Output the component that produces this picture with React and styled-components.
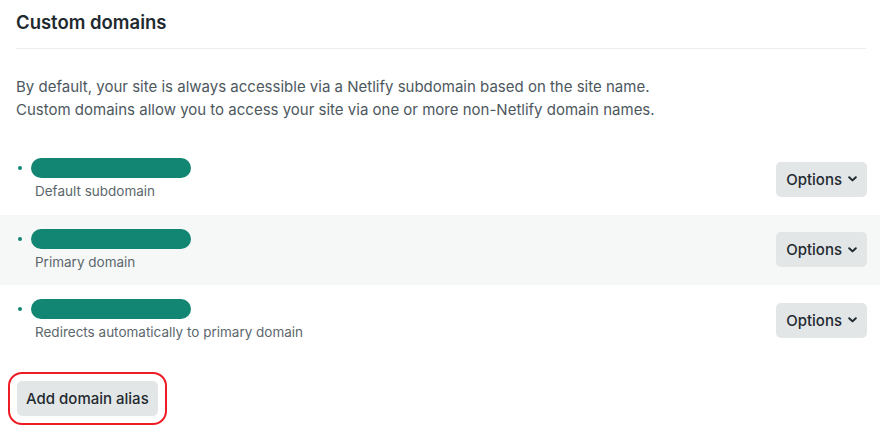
import styled, { createGlobalStyle } from "styled-components";

const GlobalStyle = createGlobalStyle`
  body {
    margin: 0;
    background: #ffffff;
    font-family: Inter, "Noto Sans", "Liberation Sans", sans-serif;
    -webkit-font-smoothing: antialiased;
  }
`;

const Container = styled.section`
  width: 880px;
  height: 428px;
  overflow: hidden;
`;

const Header = styled.div`
  margin: 0 14px 0 16px;
  padding: 11px 0 15px;
  border-bottom: 1px solid #ebeeef;
`;

const Title = styled.h2`
  margin: 0;
  font-size: 18.5px;
  line-height: 22px;
  font-weight: 600;
  color: #1f2a30;
`;

const Description = styled.p`
  margin: 26px 16px 23px;
  font-size: 15px;
  line-height: 23px;
  color: #4d585e;
`;

const List = styled.ul`
  margin: 0;
  padding: 0;
  list-style: none;
`;

const Row = styled.li`
  height: 70.5px;
  padding: 0 13px 0 18px;
  display: flex;
  align-items: center;
  justify-content: space-between;
  background: ${(p) => (p.$shaded ? "#f6f8f8" : "transparent")};
`;

const Domain = styled.div`
  align-self: flex-start;
  padding-top: 14px;
  display: flex;
  flex-direction: column;
  gap: 4px;
`;

const NameLine = styled.div`
  display: flex;
  align-items: center;
  gap: 9px;
`;

const Dot = styled.span`
  width: 4px;
  height: 4px;
  border-radius: 50%;
  background: #138573;
`;

const Redacted = styled.span`
  width: 160px;
  height: 20px;
  border-radius: 10px;
  background: #138573;
`;

const Label = styled.span`
  padding-left: 17px;
  font-size: 13.5px;
  line-height: 18px;
  color: #5c676d;
`;

const Button = styled.button`
  display: inline-flex;
  align-items: center;
  gap: 6px;
  height: 35px;
  padding: 0 10px;
  border: none;
  border-radius: 5px;
  background: #e3e6e7;
  color: #1f2a30;
  font-family: inherit;
  font-size: 15px;
  font-weight: 500;
  cursor: pointer;
`;

const AddButton = styled(Button)`
  margin: 25px 0 0 17px;
  padding: 0 9px;
  outline: 2px solid #ee1c24;
  outline-offset: 7px;
`;

const Chevron = () => (
  <svg width="9" height="6" viewBox="0 0 9 6" aria-hidden="true">
    <path
      d="M1.2 1.2 L4.5 4.4 L7.8 1.2"
      fill="none"
      stroke="#1f2a30"
      strokeWidth="2"
      strokeLinecap="round"
      strokeLinejoin="round"
    />
  </svg>
);

const domains = [
  { label: "Default subdomain" },
  { label: "Primary domain", shaded: true },
  { label: "Redirects automatically to primary domain" },
];

const App = () => {
  return (
    <Container>
      <GlobalStyle />
      <Header>
        <Title>Custom domains</Title>
      </Header>
      <Description>
        By default, your site is always accessible via a Netlify subdomain based on the site name.
        <br />
        Custom domains allow you to access your site via one or more non-Netlify domain names.
      </Description>
      <List>
        {domains.map((d) => (
          <Row key={d.label} $shaded={d.shaded}>
            <Domain>
              <NameLine>
                <Dot />
                <Redacted />
              </NameLine>
              <Label>{d.label}</Label>
            </Domain>
            <Button>
              Options <Chevron />
            </Button>
          </Row>
        ))}
      </List>
      <AddButton>Add domain alias</AddButton>
    </Container>
  );
};

export default App;
